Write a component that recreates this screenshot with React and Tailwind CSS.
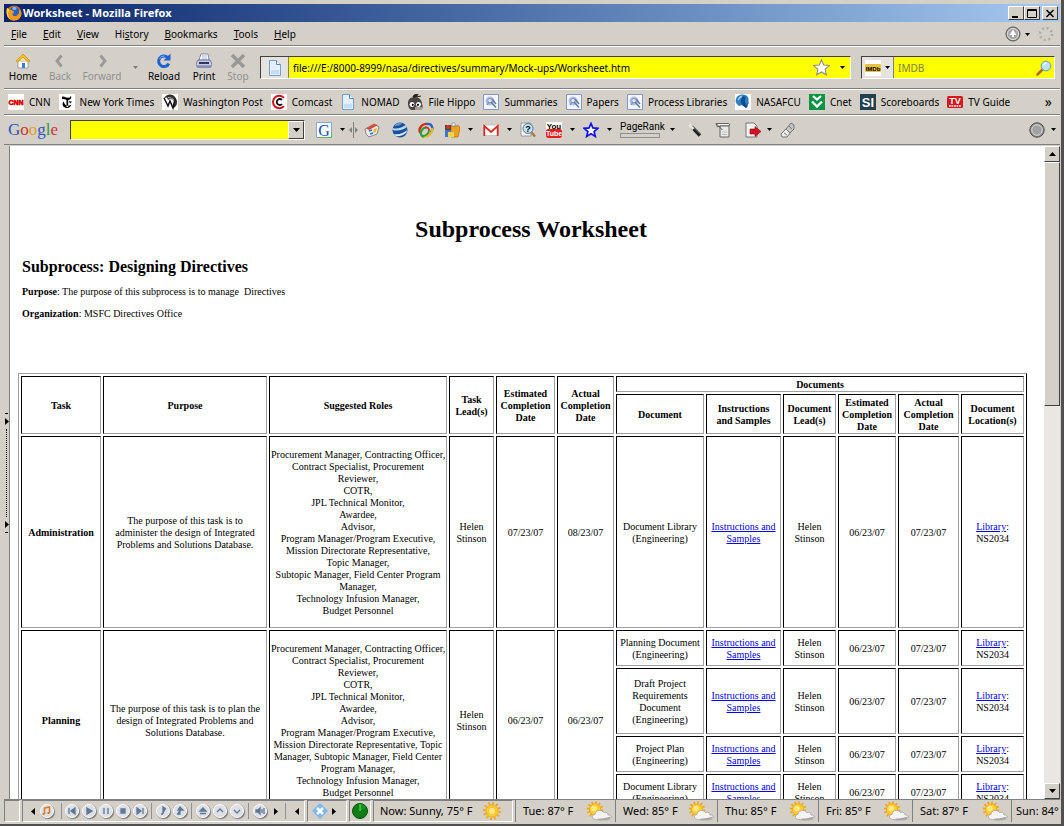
import { Fragment } from 'react';

const menus = [
  ['', 'F', 'ile'], ['', 'E', 'dit'], ['', 'V', 'iew'], ['Hi', 's', 'tory'],
  ['', 'B', 'ookmarks'], ['', 'T', 'ools'], ['', 'H', 'elp'],
];

function Svg({ children, className = 'w-4 h-4', box = '0 0 16 16' }) {
  return (
    <svg viewBox={box} className={`${className} shrink-0`} aria-hidden="true">{children}</svg>
  );
}

function Caret({ className = '' }) {
  return (
    <Svg box="0 0 5 3" className={`w-[5px] h-[3px] ${className}`}><path d="M0 0h5L2.500 3z" fill="#000"/></Svg>
  );
}

function Tri({ left, className = '' }) {
  return (
    <Svg box="0 0 4 7" className={`w-1 h-[7px] ${className}`}><path d={left ? 'M4 0v7L0 3.500z' : 'M0 0v7l4-3.500z'} fill="#000"/></Svg>
  );
}

/* ---------- icons ---------- */

const FirefoxIcon = () => (
  <Svg>
    <circle cx="8" cy="8" r="7.500" fill="#e66a00"/>
    <circle cx="8.500" cy="6.500" r="5" fill="#2a62c0"/>
    <path d="M6 2.500c2-1 4-.5 5 .5L9.500 5 7 5z" fill="#7fb4ee"/>
    <path d="M1 3c1 .3 2 1 2.500 2C5 4.500 6 5 7 6c1 .5 1.500 1 .5 2C6 8.500 6 10 8 11c2 .5 4-.5 5-3 .5-1.500 0-3-.5-4C15 5 16 8 15 11c-1.500 4-6 5.500-10 4C1 13 0 8 1 3z" fill="#f39a1c"/>
    <path d="M1 3c1 .3 2 1 2.500 2L2 8c0 3 1 5 3 7C1 13 0 8 1 3z" fill="#ffd24a"/>
  </Svg>
);

const HomeIcon = () => (
  <Svg>
    <path d="M3 8h10v7H3z" fill="#fff" stroke="#8c8c9c" strokeWidth=".8"/>
    <path d="M8 1 1 8l1.500 1L8 4l5.500 5L15 8z" fill="#ffc324" stroke="#c98500" strokeWidth=".7"/>
    <path d="M4 9l4-4 4 4-4-1.500z" fill="#ffe9a0"/>
    <path d="M7 10h3v5H7z" fill="#3c7fd0"/>
  </Svg>
);
const BackIcon = () => <Svg><path d="M9.500 2.500 5 8l4.500 5.500" fill="none" stroke="#999" strokeWidth="2.800"/></Svg>;
const ForwardIcon = () => <Svg><path d="M6.500 2.500 11 8l-4.500 5.500" fill="none" stroke="#999" strokeWidth="2.800"/></Svg>;
const ReloadIcon = () => (
  <Svg>
    <path d="M11.500 4.300A5.300 5.300 0 1 0 12.800 10.500" fill="none" stroke="#1d62d0" strokeWidth="3"/>
    <path d="M14.500.5v7h-7z" fill="#1d62d0"/>
    <path d="M3.500 6a4.800 4.800 0 0 1 5-3" fill="none" stroke="#7db1f5"/>
  </Svg>
);
const PrintIcon = () => (
  <Svg>
    <path d="M5 1h7l1 6H3z" fill="#fff" stroke="#6a74a8" strokeWidth=".8"/>
    <path d="M6 3h5M6 5h5" stroke="#9aa6d0" strokeWidth=".8"/>
    <path d="M2 7h12l2 4v2H0v-2z" fill="#c5cbe6" stroke="#59608c" strokeWidth=".8"/>
    <path d="M3 9h10v2H3z" fill="#30365c"/>
    <path d="M1 13h14v2H1z" fill="#8990b8"/>
  </Svg>
);
const StopIcon = () => <Svg><path d="m2 2 12 12M14 2 2 14" stroke="#999" strokeWidth="3.600"/></Svg>;

const PageIcon = () => (
  <Svg>
    <path d="M2.500.5h7l4 4v11h-11z" fill="#e4f0fc" stroke="#6f9fd4"/>
    <path d="M9.500.5v4h4" fill="#fff" stroke="#4f86c6"/>
    <path d="M4 10h8v4H4z" fill="#c6dcf5"/>
  </Svg>
);
const StarOutline = () => (
  <Svg className="w-[17px] h-[17px]"><path d="m8 .8 2.100 4.900 5.300.5-4 3.500 1.200 5.200L8 12.200l-4.600 2.700 1.200-5.200-4-3.500 5.300-.5z" fill="#fff" stroke="#8c8c8c"/></Svg>
);
const Magnifier = () => (
  <Svg>
    <path d="m1.500 14.500 5-5" stroke="#b8652a" strokeWidth="2.500" strokeLinecap="round"/>
    <circle cx="10" cy="6" r="4.800" fill="#b7e4fb" stroke="#6f95b8"/>
    <path d="M7.500 5.500a3 3 0 0 1 3-2.500" fill="none" stroke="#fff" strokeWidth="1.400"/>
  </Svg>
);
const ImdbIcon = () => (
  <Svg>
    <path d="M0 0h16v16H0z" fill="#fff"/>
    <rect y="4" width="16" height="8" rx="1" fill="#e8c23c"/>
    <text x="8" y="10.500" fontSize="6" fontWeight="700" textAnchor="middle" fontFamily="Liberation Sans, sans-serif">IMDb</text>
  </Svg>
);
const ThrobberOrb = () => (
  <Svg>
    <circle cx="8" cy="8" r="7" fill="#a4a4a4" stroke="#555"/>
    <circle cx="8" cy="8" r="5.500" fill="none" stroke="#e2e2e2"/>
    <path d="M8 3.500 11.500 9H9v2H7V9H4.500z" fill="#fff"/>
  </Svg>
);
const Spinner = () => (
  <Svg><circle cx="8" cy="8" r="6" fill="none" stroke="#aaa" strokeWidth="2.500" strokeDasharray="2 2.700"/></Svg>
);

const CnnIcon = () => (
  <Svg>
    <path d="M0 0h16v16H0z" fill="#fff"/>
    <text x="8" y="11" fontSize="7" fontWeight="700" fill="#d90000" stroke="#d90000" strokeWidth=".6" textAnchor="middle" fontFamily="Liberation Sans, sans-serif">CNN</text>
  </Svg>
);
const NytIcon = () => (
  <Svg>
    <path d="M0 0h16v16H0z" fill="#fff"/>
    <path d="M3 3c1.500-1.500 4 1 6 .8 1.500 0 2-.5 3-1.800.8 2-.5 4-3 4-2 0-4-1.500-5-1C2.500 6 3 4 3 3z"/>
    <path d="M5 7.500c-2 1-2 5 1 6 3 1.300 5.500 0 6.500-3-1 1-3 1.500-4.500 1C6 11 5 9.500 5 7.500zM7.500 5h1.700v8H7.500zM10 7l3 .8-2 1.700z"/>
  </Svg>
);
const WpIcon = () => (
  <Svg>
    <path d="M0 0h16v16H0z" fill="#fff"/>
    <path d="M2 4C5-1 13-1 15 7c.5 4-2 7-4 7l1.500-6C11 5 8 4 6 6L5 3.500z" fill="#333"/>
    <path d="m2 4 4 8 2-5 3 7 2-9" fill="none" stroke="#111" strokeWidth="1.500"/>
    <path d="M6 3.500c2 0 5 1 6 3" fill="none" stroke="#ccc"/>
  </Svg>
);
const ComcastIcon = () => (
  <Svg>
    <path d="M0 0h16v16H0z" fill="#fff"/>
    <path d="M13 3.800a6.300 6.300 0 1 0 0 8.400" fill="none" stroke="#d4101c" strokeWidth="2"/>
    <path d="M11 6a3 3 0 1 0 0 4" fill="none" stroke="#111" strokeWidth="1.800"/>
  </Svg>
);
const HippoIcon = () => (
  <Svg>
    <path d="M1 9c0-4 3-6 7-6s7 3 7 7c1 2 1 6-2 6H5c-3 0-4-4-4-7z" fill="#4a4340"/>
    <path d="M6 3c0-2 3-3 5-2.500L9 3zM9 3l5-1" fill="#222" stroke="#222"/>
    <circle cx="5" cy="10.500" r="3" fill="#fff" stroke="#222" strokeWidth=".8"/>
    <circle cx="11.500" cy="10.500" r="3" fill="#fff" stroke="#222" strokeWidth=".8"/>
    <circle cx="5.800" cy="10.800" r="1.100"/>
    <circle cx="11" cy="10.800" r="1.100"/>
    <path d="M8 13h7v3H8z" fill="#a89c94"/>
  </Svg>
);
const NasaDocIcon = () => (
  <Svg>
    <path d="M.5.5h15v15H.5z" fill="#f4f7ff" stroke="#8296cc"/>
    <circle cx="7" cy="7" r="4.500" fill="#b6c4e4"/>
    <circle cx="7" cy="6.500" r="2.300" fill="#dfe7f6" stroke="#7c90bc"/>
    <path d="m4 11 2-3" stroke="#8698c0" strokeWidth="1.500"/>
    <path d="m8 8 5 5.500M9 5l4 5" stroke="#66799f" strokeWidth="1.500"/>
  </Svg>
);
const NasafcuIcon = () => (
  <Svg>
    <path d="M0 0h16v16H0z" fill="#fff"/>
    <path d="M1 5c1-5 9-6 12-2 1 2 0 4 1 6l-3 5-4-3-3 1C1 10 0 8 1 5z" fill="#2f7fc4"/>
    <path d="M8 2c-2 2-3 6-1 9l4 3 2-2c-3-2-4-6-2-9z" fill="#134e94"/>
    <path d="M3 6c1-2 2-3 4-4" fill="none" stroke="#a5d4f4" strokeWidth="1.400"/>
  </Svg>
);
const CnetIcon = () => (
  <Svg>
    <path d="M0 0h16v16H0z" fill="#0a9444"/>
    <path d="m4 2 4 3.500L12 2M3 7.500l5 5 5-5" fill="none" stroke="#fff" strokeWidth="2.300"/>
  </Svg>
);
const SiIcon = () => (
  <Svg>
    <path d="M0 0h16v16H0z" fill="#23404e"/>
    <text x="8" y="13" fontSize="13" fontWeight="700" fill="#fff" textAnchor="middle" fontFamily="Liberation Sans, sans-serif">SI</text>
  </Svg>
);
const TvIcon = () => (
  <Svg>
    <rect y="2" width="16" height="12" rx="1.500" fill="#d8161c"/>
    <text x="8" y="9.500" fontSize="9" fontWeight="700" fill="#fff" textAnchor="middle" fontFamily="Liberation Sans, sans-serif">TV</text>
    <path d="M2 12h12" stroke="#fff" strokeWidth="1.500" strokeDasharray="1.800 .7"/>
  </Svg>
);

const GIcon = () => (
  <Svg>
    <path d="M.5.5h15v15H.5z" fill="#fff" stroke="#7fa8e8"/>
    <path d="M1 15.500h14.500V10" fill="none" stroke="#5cb85c"/>
    <text x="8" y="13.500" fontSize="16" fill="#1548c0" textAnchor="middle" fontFamily="Liberation Serif, serif">G</text>
  </Svg>
);
const NewsIcon = () => (
  <Svg>
    <path d="m1 7 9-5 5 3-2 7-8 3-3-3z" fill="#ececec" stroke="#888"/>
    <path d="m2 6.500 8-4.500 4 1-9 5z" fill="#e0473a"/>
    <path d="m5 9 3-1M6 12l3-1" stroke="#2f74d0" strokeWidth="1.800"/>
    <path d="m10 7 3-1-1 4-3 1z" fill="#f5b52e"/>
  </Svg>
);
const EarthIcon = () => (
  <Svg>
    <circle cx="8" cy="8" r="7.500" fill="#1c4f9c"/>
    <path d="M.8 6c4 1.500 9 0 12.700-3l1.300 2c-3 3-9 4.500-14.200 3z" fill="#b9dcf4"/>
    <path d="M2 12c5 1 10-1 13-4l-.5 2.500c-3 2.500-7 4.500-11 3.500z" fill="#d6ecfb"/>
    <path d="M3 3c2-2 5-2.500 7-2-1 2-5 3.500-7 3z" fill="#5b9fd8"/>
  </Svg>
);
const RingIcon = () => (
  <Svg>
    <g fill="none" strokeWidth="2.300" strokeLinecap="round">
      <path d="M1.800 10c-1.500-4 3-9 7.500-8" stroke="#d92a1c"/>
      <path d="M9.300 2c5-.5 6.500 5 3.500 8" stroke="#2462c8"/>
      <path d="M14 7c1 4-4 8.500-9 7.500" stroke="#f2b81c"/>
      <path d="M5 14.500c-4-2-2-8 2.500-9" stroke="#28a03c"/>
      <path d="M5 14c3 0 6-3 6-6" stroke="#28a03c" strokeWidth="1.800"/>
      <path d="M7.500 5.500c2-.5 3 .5 3.500 2" stroke="#d92a1c" strokeWidth="1.800"/>
    </g>
  </Svg>
);
const PuzzleIcon = () => (
  <Svg>
    <path d="M1 3h6v5H1z" fill="#444"/>
    <path d="M7 4c2-1 3 1 5 0 2-1 4 0 4 2l-2 9H7z" fill="#f0a020" stroke="#9c5f00" strokeWidth=".6"/>
    <path d="M1 8h6v7H1z" fill="#3b78d0"/>
    <path d="M4 10h6v5H4z" fill="#f8d448"/>
    <path d="M8 1h3v3H8z" fill="#fff" stroke="#777" strokeWidth=".6"/>
    <circle cx="4" cy="5" r="2" fill="#d8362a"/>
  </Svg>
);
const GmailIcon = () => (
  <Svg>
    <path d="M.5 3h15v10.500H.5z" fill="#fff" stroke="#c4c4c4"/>
    <path d="M1.300 14V4L8 10l6.700-6v10" fill="none" stroke="#dc2b20" strokeWidth="1.800"/>
  </Svg>
);
const HelpSearchIcon = () => (
  <Svg>
    <path d="M1 1h10v13H1z" fill="#f6f6f6" stroke="#999"/>
    <circle cx="8" cy="6.500" r="5" fill="#c3e4f6" stroke="#4d7897"/>
    <path d="m11.500 10.500 3.500 4" stroke="#b07832" strokeWidth="2.500"/>
    <text x="8" y="9.800" fontSize="9" fontWeight="700" textAnchor="middle" fontFamily="Liberation Sans, sans-serif">?</text>
  </Svg>
);
const YoutubeIcon = () => (
  <Svg>
    <path d="M0 0h16v16H0z" fill="#fff"/>
    <rect y="7" width="16" height="9" rx="2" fill="#e02020"/>
    <text x="8" y="6.500" fontSize="8" fontWeight="700" textAnchor="middle" fontFamily="Liberation Sans, sans-serif">You</text>
    <text x="8" y="14.200" fontSize="7" fontWeight="700" fill="#fff" textAnchor="middle" fontFamily="Liberation Sans, sans-serif">Tube</text>
  </Svg>
);
const BlueStar = () => (
  <Svg><path d="m8 1.500 1.900 4.400 4.900.4-3.700 3.200 1.200 4.900L8 11.800l-4.300 2.600 1.200-4.900L1.200 6.300l4.900-.4z" fill="#fff" stroke="#1010f0" strokeWidth="1.700"/></Svg>
);
const WandIcon = () => (
  <Svg>
    <path d="m5 5 8 8.500" stroke="#222" strokeWidth="3.500"/>
    <path d="m2.500 2.500 4 4.500" stroke="#e8e8e8" strokeWidth="3"/>
    <path d="m5 3.500 9 9" stroke="#888"/>
  </Svg>
);
const ScrollIcon = () => (
  <Svg>
    <path d="M1 1.500h12.500c1.500 0 1.500 2.500 0 2.500H5L2.500 5z" fill="#f2f2f2" stroke="#666"/>
    <path d="M5 4h9v11H5z" fill="#e9e9e9" stroke="#666"/>
    <path d="m1.500 2 6 6" stroke="#555"/>
    <path d="M7 10h5M7 12.500h5" stroke="#bbb"/>
  </Svg>
);
const ExportIcon = () => (
  <Svg>
    <path d="M1 1h8l3 3v11H1z" fill="#f2f2f2" stroke="#777"/>
    <path d="M5 7h5V4.500l6 5-6 5V12H5z" fill="#d81026" stroke="#7a0814" strokeWidth=".6"/>
  </Svg>
);
const EraserIcon = () => (
  <Svg>
    <path d="m1 12 5-5 4 4-3 4H2z" fill="#ededed" stroke="#777"/>
    <path d="m6 7 5-6 3 2v4l-4 4z" fill="#c4c4c4" stroke="#777"/>
    <path d="m4 11 3 2M9 4l3 3" stroke="#777"/>
  </Svg>
);
const GrayOrb = () => (
  <Svg>
    <circle cx="8" cy="8" r="7.200" fill="#8a8a8a" stroke="#4e4e4e"/>
    <circle cx="8" cy="8" r="5.300" fill="#a2a2a2" stroke="#dcdcdc"/>
  </Svg>
);

const SunIcon = () => (
  <Svg box="0 0 20 20" className="w-5 h-5">
    <circle cx="10" cy="10" r="7.800" fill="none" stroke="#f3a71f" strokeWidth="2.600" strokeDasharray="1.800 2.280"/>
    <circle cx="10" cy="10" r="6.200" fill="#ffd02c" stroke="#f0a010" strokeWidth=".8"/>
    <circle cx="10" cy="10" r="3.800" fill="#ffe784" stroke="#f2b32a" strokeWidth=".8"/>
  </Svg>
);
const CloudIcon = () => (
  <Svg box="0 0 28 20" className="w-7 h-5">
    <circle cx="10" cy="8.500" r="7" fill="none" stroke="#f3a71f" strokeWidth="2.600" strokeDasharray="1.700 1.960"/>
    <circle cx="10" cy="8.500" r="5.700" fill="#ffd02c" stroke="#f0a010" strokeWidth=".8"/>
    <circle cx="9" cy="7.500" r="2.800" fill="#ffe784"/>
    <path d="M9 18c-2.500-1-2-4.500 1-4.500 0-4.500 6.500-5.500 8.500-2 3-1 4.500.5 4.500 2.500 3.500-.5 5 3 2 4.200-3 1.300-12 1.300-16-.2z" fill="#f4f4f4" stroke="#a5a5a5" strokeWidth=".8"/>
    <path d="M12 18c4-1 9-.5 14-2.500-.5 2.800-3 3.500-7 3.500-3 0-6 0-7-1z" fill="#a5a5a5"/>
  </Svg>
);
const RadarIcon = () => (
  <Svg>
    <circle cx="8" cy="8" r="7.500" fill="#0d7d14" stroke="#074d0c"/>
    <path d="M8 8V1a7 7 0 0 1 6 4z" fill="#169420"/>
    <path d="M8 1v7" stroke="#6fe86f"/>
  </Svg>
);
const BlueCross = () => (
  <Svg>
    <path d="M8 2l6 6-6 6-6-6z" fill="#7db8f0" stroke="#7db8f0" strokeWidth="3" strokeLinejoin="round"/>
    <path d="m5 5 6 6M11 5l-6 6" stroke="#fff" strokeWidth="2.500"/>
  </Svg>
);

/* ---------- data ---------- */

const bookmarks = [
  ['CNN', CnnIcon], ['New York Times', NytIcon], ['Washington Post', WpIcon], ['Comcast', ComcastIcon],
  ['NOMAD', PageIcon], ['File Hippo', HippoIcon], ['Summaries', NasaDocIcon], ['Papers', NasaDocIcon],
  ['Process Libraries', NasaDocIcon], ['NASAFCU', NasafcuIcon], ['Cnet', CnetIcon],
  ['Scoreboards', SiIcon], ['TV Guide', TvIcon],
];

const media = [
  ['Previous', 'M5 5v6M11 5 7 8l4 3z'],
  ['Play', 'M6 5l5 3-5 3z'],
  ['Pause', 'M6 5v6M10 5v6'],
  ['Stop playing', 'M6 6h4v4H6z'],
  ['Next', 'M5 5l4 3-4 3zM11 5v6'],
  null,
  ['Track', 'M8 11V4l3 2M6 11h2'],
  ['Share', 'M5 11h3V6M6 7l2-3 3 3z'],
  null,
  ['Eject', 'M5 8l3-3 3 3zM5 10.500h6'],
  ['Up', 'M5 9l3-3 3 3'],
  ['Down', 'M5 7l3 3 3-3'],
  null,
  ['Volume', 'M4 7h2l2-2v6L6 9H4zM10 6v4M12 5v6'],
];

const days = [
  ['Tue: 87° F', 'w-[100px]'], ['Wed: 85° F', 'w-[102px]'], ['Thu: 85° F', 'w-[101px]'],
  ['Fri: 85° F', 'w-[94px]'], ['Sat: 87° F', 'w-[99px]'],
];

const adminRoles = [
  'Procurement Manager, Contracting Officer,', 'Contract Specialist, Procurement', 'Reviewer,', 'COTR,',
  'JPL Technical Monitor,', 'Awardee,', 'Advisor,', 'Program Manager/Program Executive,',
  'Mission Directorate Representative,', 'Topic Manager,', 'Subtopic Manager, Field Center Program',
  'Manager,', 'Technology Infusion Manager,', 'Budget Personnel',
];
const planningRoles = [
  ...adminRoles.slice(0, 8), 'Mission Directorate Representative, Topic', 'Manager, Subtopic Manager, Field Center',
  'Program Manager,', 'Technology Infusion Manager,', 'Budget Personnel',
];

const planningDocs = [
  { lines: ['Planning Document', '(Engineering)'], h: 'h-9' },
  { lines: ['Draft Project', 'Requirements', 'Document', '(Engineering)'], h: 'h-[66px]' },
  { lines: ['Project Plan', '(Engineering)'], h: 'h-9' },
  { lines: ['Document Library', '(Engineering)'], h: 'h-9' },
];

/* ---------- worksheet ---------- */

const cell = 'border border-t-black border-l-black border-r-[#a0a0a0] border-b-[#a0a0a0] px-px pt-0.5 text-center align-middle';

function Lines({ items }) {
  return items.map((l, i) => <Fragment key={i}>{i > 0 && <br/>}{l}</Fragment>);
}

function Th({ lines, ...rest }) {
  return <th className={`${cell} font-bold`} {...rest}><Lines items={lines}/></th>;
}

function Td({ lines, className = '', ...rest }) {
  return <td className={`${cell} ${className}`} {...rest}><Lines items={lines}/></td>;
}

function DocCells({ lines, h }) {
  return (
    <>
      <Td lines={lines} className={h}/>
      <td className={cell}><a href="#samples" className="text-[#0000ee] underline">Instructions and<br/>Samples</a></td>
      <Td lines={['Helen', 'Stinson']}/>
      <Td lines={['06/23/07']}/>
      <Td lines={['07/23/07']}/>
      <td className={cell}><a href="#library" className="text-[#0000ee] underline">Library</a>:<br/>NS2034</td>
    </>
  );
}

function Worksheet() {
  return (
    <main className="flex-1 min-w-0 overflow-hidden bg-white pl-2 font-['Liberation_Serif',serif] text-[10px] leading-3 text-black whitespace-nowrap">
      <h1 className="mt-[69px] text-center text-2xl leading-7 font-bold">Subprocess Worksheet</h1>
      <div className="pl-1">
        <h2 className="mt-3.5 text-base leading-5 font-bold">Subprocess: Designing Directives</h2>
        <p className="mt-[9px]"><b>Purpose</b>: The purpose of this subprocess is to manage &nbsp;Directives</p>
        <p className="mt-2.5"><b>Organization</b>: MSFC Directives Office</p>
      </div>
      <div className="mt-[53px] pr-[17px]">
        <table className="w-full table-fixed border-separate border-spacing-0.5 border border-t-[#a0a0a0] border-l-[#a0a0a0] border-r-black border-b-black">
          <colgroup>
            <col className="w-20"/><col className="w-[164px]"/><col className="w-[178px]"/><col className="w-[45px]"/>
            <col className="w-[59px]"/><col className="w-[57px]"/><col className="w-[88px]"/><col className="w-[75px]"/>
            <col className="w-[53px]"/><col className="w-[58px]"/><col className="w-[61px]"/><col className="w-[63px]"/>
          </colgroup>
          <thead>
            <tr>
              <Th rowSpan={2} lines={['Task']}/>
              <Th rowSpan={2} lines={['Purpose']}/>
              <Th rowSpan={2} lines={['Suggested Roles']}/>
              <Th rowSpan={2} lines={['Task', 'Lead(s)']}/>
              <Th rowSpan={2} lines={['Estimated', 'Completion', 'Date']}/>
              <Th rowSpan={2} lines={['Actual', 'Completion', 'Date']}/>
              <Th colSpan={6} lines={['Documents']}/>
            </tr>
            <tr>
              <Th lines={['Document']}/>
              <Th lines={['Instructions', 'and Samples']}/>
              <Th lines={['Document', 'Lead(s)']}/>
              <Th lines={['Estimated', 'Completion', 'Date']}/>
              <Th lines={['Actual', 'Completion', 'Date']}/>
              <Th lines={['Document', 'Location(s)']}/>
            </tr>
          </thead>
          <tbody>
            <tr>
              <Th scope="row" lines={['Administration']}/>
              <Td lines={['The purpose of this task is to', 'administer the design of Integrated', 'Problems and Solutions Database.']}/>
              <Td lines={adminRoles}/>
              <Td lines={['Helen', 'Stinson']}/>
              <Td lines={['07/23/07']}/>
              <Td lines={['08/23/07']}/>
              <DocCells lines={['Document Library', '(Engineering)']} h="h-48"/>
            </tr>
            {planningDocs.map((d, i) => (
              <tr key={i}>
                {i === 0 && (
                  <>
                    <Th scope="row" rowSpan={4} lines={['Planning']}/>
                    <Td rowSpan={4} lines={['The purpose of this task is to plan the', 'design of Integrated Problems and', 'Solutions Database.']}/>
                    <Td rowSpan={4} lines={planningRoles}/>
                    <Td rowSpan={4} lines={['Helen', 'Stinson']}/>
                    <Td rowSpan={4} lines={['06/23/07']}/>
                    <Td rowSpan={4} lines={['06/23/07']}/>
                  </>
                )}
                <DocCells {...d}/>
              </tr>
            ))}
          </tbody>
        </table>
      </div>
    </main>
  );
}

/* ---------- browser chrome ---------- */

const raised = 'bg-[#d4d0c8] border border-t-white border-l-white border-r-[#404040] border-b-[#404040]';
const sunken = 'border border-t-[#808080] border-l-[#808080] border-r-white border-b-white';
const bar = 'flex items-center border-b border-[#808080] shadow-[0_1px_0_#fff] shrink-0';

function NavButton({ label, width, icon, disabled }) {
  return (
    <button disabled={disabled} className={`${width} flex flex-col items-center ${disabled ? 'text-[#909090]' : ''}`}>
      {icon}
      <span className="leading-[14px]">{label}</span>
    </button>
  );
}

function IconButton({ label, children, className = '' }) {
  return <button aria-label={label} title={label} className={`flex items-center shrink-0 ${className}`}>{children}</button>;
}

function TitleBar() {
  return (
    <header className="mb-px flex h-[18px] shrink-0 items-center bg-linear-to-r from-[#0a246a] to-[#a6caf0] pl-0.5 pr-0.5">
      <FirefoxIcon/>
      <span className="ml-px flex-1 text-[11px] font-bold text-white">Worksheet - Mozilla Firefox</span>
      <IconButton label="Minimize" className={`${raised} h-3.5 w-4 justify-center`}>
        <Svg box="0 0 10 9" className="w-2.5 h-[9px]"><path d="M1 7h6v2H1z"/></Svg>
      </IconButton>
      <IconButton label="Maximize" className={`${raised} h-3.5 w-4 justify-center`}>
        <Svg box="0 0 10 9" className="w-2.5 h-[9px]"><path d="M.5.5h9v8h-9zM0 1.500h10" fill="none" stroke="#000"/></Svg>
      </IconButton>
      <IconButton label="Close" className={`${raised} ml-0.5 h-3.5 w-4 justify-center`}>
        <Svg box="0 0 10 9" className="w-2.5 h-[9px]"><path d="m1.500 1 7 7M8.500 1l-7 7" stroke="#000" strokeWidth="1.500"/></Svg>
      </IconButton>
    </header>
  );
}

function MenuBar() {
  return (
    <nav className={`${bar} h-[23px] gap-4 pl-[7px] pr-1.5`}>
      {menus.map(([a, u, b]) => (
        <button key={u + b}>{a}<span className="underline">{u}</span>{b}</button>
      ))}
      <div className="ml-auto flex items-center gap-2">
        <IconButton label="Updates" className="gap-1"><ThrobberOrb/><Caret/></IconButton>
        <Spinner/>
      </div>
    </nav>
  );
}

function NavBar() {
  return (
    <div className={`${bar} h-[43px] pt-px pr-[5px]`}>
      <NavButton label="Home" width="w-[38px]" icon={<HomeIcon/>}/>
      <NavButton label="Back" width="w-9" icon={<BackIcon/>} disabled/>
      <NavButton label="Forward" width="w-12" icon={<ForwardIcon/>} disabled/>
      <span className="flex w-[18px] justify-center"><Caret className="opacity-40"/></span>
      <NavButton label="Reload" width="w-10" icon={<ReloadIcon/>}/>
      <NavButton label="Print" width="w-10" icon={<PrintIcon/>}/>
      <NavButton label="Stop" width="w-7" icon={<StopIcon/>} disabled/>
      <div className="ml-2 flex h-[23px] flex-1 items-center border border-t-[#404040] border-l-[#404040] border-r-white border-b-white bg-[#ffff00]">
        <span className="flex h-full w-7 items-center justify-center border-r border-[#808080] bg-[#e6e3de]"><PageIcon/></span>
        <input aria-label="Location" defaultValue="file:///E:/8000-8999/nasa/directives/summary/Mock-ups/Worksheet.htm" className="min-w-0 flex-1 bg-transparent pl-1 outline-none"/>
        <IconButton label="Bookmark this page"><StarOutline/></IconButton>
        <IconButton label="Show history" className="ml-1 h-full w-4 justify-center"><Caret/></IconButton>
      </div>
      <div className="ml-2.5 flex h-[23px] w-[194px] items-center border border-t-[#404040] border-l-[#404040] border-r-white border-b-white bg-[#ffff00]">
        <IconButton label="Search engine" className="h-full w-8 justify-center gap-1 border-r border-[#808080] bg-[#e6e3de]"><ImdbIcon/><Caret/></IconButton>
        <input aria-label="Search" placeholder="IMDB" className="min-w-0 flex-1 bg-transparent pl-1 outline-none placeholder:text-[#808040]"/>
        <IconButton label="Search" className="pr-0.5"><Magnifier/></IconButton>
      </div>
    </div>
  );
}

function BookmarksBar() {
  return (
    <div className={`${bar} h-[26px] gap-2 pt-px pl-1 pr-2`}>
      {bookmarks.map(([label, Icon]) => (
        <a key={label} href="#bookmark" className="flex items-center gap-[5px] whitespace-nowrap"><Icon/>{label}</a>
      ))}
      <button aria-label="More bookmarks" className="ml-auto text-sm">»</button>
    </div>
  );
}

function GoogleBar() {
  return (
    <div className="flex h-[30px] shrink-0 items-center border-b border-[#808080] pl-1 pr-1">
      <button className="w-[62px] text-left font-['Liberation_Serif',serif] text-[17px] leading-5">
        <span className="text-[#2a56c8]">G</span><span className="text-[#d0342c]">o</span><span className="text-[#dfa41c]">o</span>
        <span className="text-[#2a56c8]">g</span><span className="text-[#2c9a3c]">l</span><span className="text-[#d0342c]">e</span>
      </button>
      <div className="flex h-5 w-[235px] items-center border border-t-[#404040] border-l-[#404040] border-r-white border-b-white bg-[#ffff00]">
        <input aria-label="Google search" className="min-w-0 flex-1 bg-transparent pl-1 outline-none"/>
        <IconButton label="Recent searches" className={`${raised} h-full w-4 justify-center`}><Svg box="0 0 7 4" className="w-[7px] h-1"><path d="M0 0h7L3.500 4z"/></Svg></IconButton>
      </div>
      <div className="ml-[11px] flex items-center gap-2">
        <IconButton label="Google" className="gap-2"><GIcon/><Caret/></IconButton>
        <Svg box="0 0 9 16" className="-ml-1 w-[9px] h-4"><path d="M4.500 0v16" stroke="#808080"/><path d="M0 8l3-3v6zM9 8 6 5v6z" fill="#808080"/></Svg>
        <IconButton label="News" className="-ml-0.5"><NewsIcon/></IconButton>
        <IconButton label="Earth" className="ml-1"><EarthIcon/></IconButton>
        <IconButton label="Picasa" className="ml-0.5"><RingIcon/></IconButton>
        <IconButton label="Gadgets" className="ml-0.5 gap-2"><PuzzleIcon/><Caret/></IconButton>
        <IconButton label="Gmail" className="ml-0.5 gap-2"><GmailIcon/><Caret/></IconButton>
        <IconButton label="Search history"><HelpSearchIcon/></IconButton>
        <IconButton label="YouTube" className="ml-0.5 gap-2"><YoutubeIcon/><Caret/></IconButton>
        <IconButton label="Bookmarks" className="gap-2"><BlueStar/><Caret/></IconButton>
        <button className="flex items-center gap-1.5 font-['Roboto',sans-serif] leading-[11px]">
          <span className="flex w-11 flex-col gap-px">PageRank<span className="h-[5px] w-10 border border-[#909090]"/></span>
          <Caret/>
        </button>
        <IconButton label="AutoFill" className="ml-1"><WandIcon/></IconButton>
        <IconButton label="Notebook" className="ml-1"><ScrollIcon/></IconButton>
        <IconButton label="Send to" className="ml-1.5 gap-1.5"><ExportIcon/><Caret/></IconButton>
        <IconButton label="Highlight"><EraserIcon/></IconButton>
      </div>
      <IconButton label="Settings" className="ml-auto gap-1.5"><GrayOrb/><Caret/></IconButton>
    </div>
  );
}

function Splitter() {
  return (
    <div className="flex w-1.5 shrink-0 flex-col items-center border-r border-[#808080] pt-[267px]">
      <span className="h-px w-[3px] bg-black"/>
      <Tri className="mt-1"/>
      <span className="my-1 h-[88px] border-l border-dotted border-black"/>
      <Tri className="mb-1"/>
      <span className="h-px w-[3px] bg-black"/>
    </div>
  );
}

function ScrollBar() {
  return (
    <div className="flex w-4 shrink-0 flex-col bg-[#eae7e3]">
      <IconButton label="Scroll up" className={`${raised} h-4 justify-center`}><Svg box="0 0 7 4" className="w-[7px] h-1"><path d="M0 4h7L3.500 0z"/></Svg></IconButton>
      <div className={`${raised} h-[244px]`}/>
      <IconButton label="Scroll down" className={`${raised} mt-auto h-4 justify-center`}><Svg box="0 0 7 4" className="w-[7px] h-1"><path d="M0 0h7L3.500 4z"/></Svg></IconButton>
    </div>
  );
}

function Orb({ label, children }) {
  return (
    <IconButton label={label} className="h-3.5 w-3.5 justify-center rounded-full border border-white bg-[#dcdfe6] shadow-[1px_1px_1px_#777]">
      <Svg>{children}</Svg>
    </IconButton>
  );
}

const Rule = ({ className = 'mx-px' }) => <span className={`h-4 w-px bg-[#909090] ${className}`}/>;

function StatusBar() {
  return (
    <footer className="flex h-[23px] shrink-0 items-stretch gap-0.5 overflow-hidden border-t border-[#808080] text-[11px] whitespace-nowrap">
      <div className={`${sunken} w-4 shrink-0`}/>
      <div className={`${sunken} flex w-[283px] shrink-0 items-center gap-[3px] pl-2`}>
        <Tri left className="mr-0.5"/>
        <Orb label="Music"><path d="M5.500 11V5l5-1v6" fill="none" stroke="#e07818" strokeWidth="1.500"/><path d="M3.500 10h2v2h-2zM8.500 9h2v2h-2z" fill="#e07818"/></Orb>
        <Rule className="ml-1"/>
        {media.map((m, i) => m
          ? <Orb key={i} label={m[0]}><path d={m[1]} fill={m[0] === 'Up' || m[0] === 'Down' ? 'none' : '#5f7896'} stroke="#5f7896" strokeWidth="1.300"/></Orb>
          : <Rule key={i}/>)}
        <Tri className="ml-1"/>
        <Rule className="mx-1"/>
        <Tri left className="ml-0.5"/>
      </div>
      <div className={`${sunken} flex w-10 shrink-0 items-center gap-1 pl-1`}><BlueCross/><Tri/></div>
      <div className={`${sunken} flex w-[22px] shrink-0 items-center justify-center`}><RadarIcon/></div>
      <div className={`${sunken} flex w-[140px] shrink-0 items-center justify-between pl-1.5 pr-2.5`}>Now: Sunny, 75° F<SunIcon/></div>
      {days.map(([label, w]) => (
        <div key={label} className={`${w} -mr-0.5 flex shrink-0 items-center justify-between border-l border-[#808080] pl-[7px] pr-0.5`}>{label}<CloudIcon/></div>
      ))}
      <div className="flex shrink-0 items-center border-l border-[#808080] pl-1">Sun: 84°</div>
    </footer>
  );
}

export default function App() {
  return (
    <div className="flex h-screen flex-col overflow-hidden border-r-[3px] border-b-2 border-[#505050] bg-[#d4d0c8] pt-1 pr-px pb-0.5 pl-1 font-['Noto_Sans',sans-serif] text-[10px] leading-[14px] text-black">
      <TitleBar/>
      <MenuBar/>
      <NavBar/>
      <BookmarksBar/>
      <GoogleBar/>
      <div className="mt-px flex min-h-0 flex-1">
        <Splitter/>
        <Worksheet/>
        <ScrollBar/>
      </div>
      <StatusBar/>
    </div>
  );
}
